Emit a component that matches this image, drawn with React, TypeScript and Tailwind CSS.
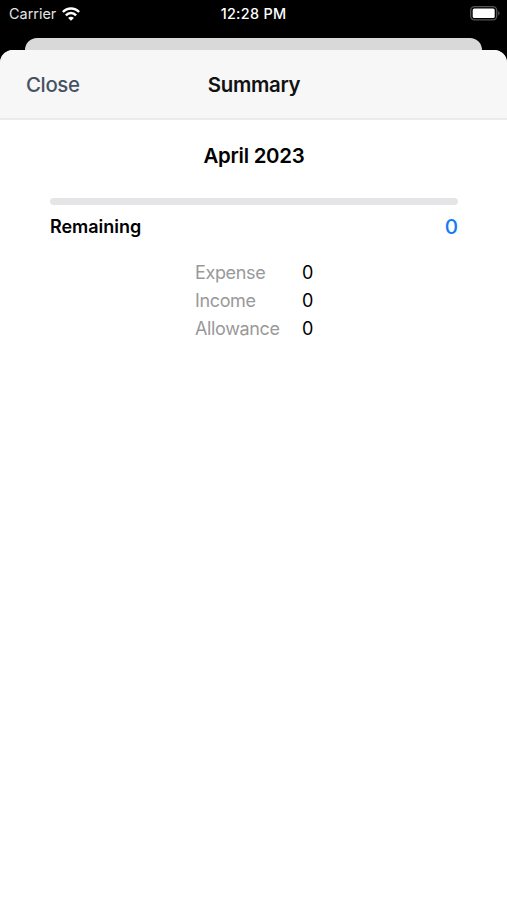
// src/App.tsx
import React from 'react';

interface SummaryRow {
  label: string;
  value: number;
}

interface SummarySheetProps {
  month: string;
  remaining: number;
  rows: SummaryRow[];
}

const summaryRows: SummaryRow[] = [
  { label: 'Expense', value: 0 },
  { label: 'Income', value: 0 },
  { label: 'Allowance', value: 0 },
];

const WifiIcon: React.FC = () => (
  <svg width="18" height="14" viewBox="0 0 18 14" fill="none" stroke="#fff" strokeWidth="2.5">
    <path d="M0.9 5C5.3 0.3 12.7 0.3 17.1 5" />
    <path d="M3.9 8.4C6.8 5.3 11.2 5.3 14.1 8.4" />
    <path d="M9 13.8L6.1 10.9C7.7 9.3 10.3 9.3 11.9 10.9Z" fill="#fff" stroke="none" />
  </svg>
);

const BatteryIcon: React.FC = () => (
  <svg width="30" height="15" viewBox="0 0 30 15" fill="none">
    <rect x="0.7" y="0.7" width="26" height="13.2" rx="3.8" stroke="#555" strokeWidth="1.3" />
    <rect x="2.7" y="2.5" width="22" height="9.6" rx="1.6" fill="#fff" />
    <path d="M28.2 5.1C30 5.8 30 8.8 28.2 9.5Z" fill="#555" />
  </svg>
);

const StatusBar: React.FC = () => (
  <div className="grid h-[38px] grid-cols-3 items-start pl-[9px] pr-[7px] text-white">
    <div className="flex items-center gap-[6px] pt-[4px]">
      <span className="text-[14.4px] leading-5 tracking-[0.02px] text-[#e4e4e4]">Carrier</span>
      <WifiIcon />
    </div>
    <div className="pt-[4px] text-center text-[14.4px] font-medium leading-5 tracking-[0.3px] -ml-[2px]">12:28 PM</div>
    <div className="flex justify-end pt-[6px]">
      <BatteryIcon />
    </div>
  </div>
);

const SummarySheet: React.FC<SummarySheetProps> = ({ month, remaining, rows }) => {
  return (
    <div className="flex flex-1 flex-col overflow-hidden rounded-t-[13px] bg-white">
      <header className="grid h-[70px] grid-cols-3 items-center border-b-2 border-[#ebebeb] bg-[#f7f7f7] px-[26px] pt-[3px]">
        <button className="text-left text-[20.4px] font-medium tracking-[-0.35px] text-[#465261]">Close</button>
        <h1 className="pl-px text-center text-[20.4px] font-semibold tracking-[-0.3px] text-[#111]">Summary</h1>
      </header>

      <main className="pl-[50px] pr-[49px]">
        <h2 className="mt-[21px] text-center text-[20.4px] font-semibold leading-[30px] tracking-[-0.25px]">{month}</h2>
        <div className="mt-[27px] h-[7px] rounded-full bg-[#e5e5e7]" />
        <div className="mt-[7px] flex items-center justify-between leading-[30px]">
          <span className="text-[18px] font-semibold tracking-[-0.02px]">Remaining</span>
          <span className="text-[20.6px] font-medium text-[#117df5]">{remaining}</span>
        </div>

        <div className="ml-[145px] mt-[17px] grid w-fit grid-cols-[107px_auto] text-[18px] leading-[28px]">
          {rows.map((row) => (
            <React.Fragment key={row.label}>
              <span className="tracking-[-0.36px] text-[#999]">{row.label}</span>
              <span>{row.value}</span>
            </React.Fragment>
          ))}
        </div>
      </main>
    </div>
  );
};

const App: React.FC = () => {
  return (
    <div className="flex h-[900px] w-full max-w-[507px] flex-col bg-black font-['Inter',sans-serif] text-black">
      <StatusBar />
      {/* edge of the screen behind the sheet */}
      <div className="mx-[25px] h-[12px] rounded-t-[12px] bg-[#d9d9d9]" />
      <SummarySheet month="April 2023" remaining={0} rows={summaryRows} />
    </div>
  );
};

export default App;
